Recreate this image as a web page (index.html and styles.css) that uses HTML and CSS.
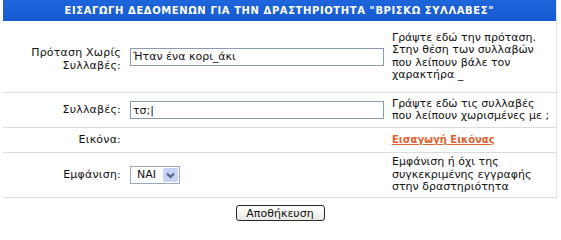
FILE: index.html
```html
<!DOCTYPE html>
<html lang="el">
<head>
<meta charset="utf-8">
<link rel="stylesheet" href="styles.css">
</head>
<body>
<div class="page">
  <table class="form">
    <colgroup>
      <col class="c-label">
      <col class="c-field">
      <col class="c-desc">
    </colgroup>
    <thead>
      <tr><th colspan="3" class="title">ΕΙΣΑΓΩΓΗ ΔΕΔΟΜΕΝΩΝ ΓΙΑ ΤΗΝ ΔΡΑΣΤΗΡΙΟΤΗΤΑ "ΒΡΙΣΚΩ ΣΥΛΛΑΒΕΣ"</th></tr>
    </thead>
    <tbody>
      <tr class="r1">
        <td class="label">Πρόταση Χωρίς<br>Συλλαβές:</td>
        <td class="field"><input class="text" type="text" value="Ήταν ένα κορι_άκι"></td>
        <td class="desc">Γράψτε εδώ την πρόταση.<br>Στην θέση των συλλαβών<br>που λείπουν βάλε τον<br>χαρακτήρα _</td>
      </tr>
      <tr class="r2">
        <td class="label">Συλλαβές:</td>
        <td class="field"><input class="text" type="text" value="τσ;|"></td>
        <td class="desc">Γράψτε εδώ τις συλλαβές<br>που λείπουν χωρισμένες με ;</td>
      </tr>
      <tr class="r3">
        <td class="label">Εικόνα:</td>
        <td class="field"></td>
        <td class="desc"><a class="link" href="#">Εισαγωγή Εικόνας</a></td>
      </tr>
      <tr class="r4">
        <td class="label">Εμφάνιση:</td>
        <td class="field">
          <div class="select"><span class="sel-val">NAI</span><span class="sel-btn"><svg width="9" height="7" viewBox="0 0 9 7"><path d="M1 1.5 L4.5 5 L8 1.5" fill="none" stroke="#4d6185" stroke-width="2"/></svg></span></div>
        </td>
        <td class="desc">Εμφάνιση ή όχι της<br>συγκεκριμένης εγγραφής<br>στην δραστηριότητα</td>
      </tr>
    </tbody>
  </table>
  <div class="actions"><button class="save" type="button">Αποθήκευση</button></div>
</div>
</body>
</html>
```

FILE: styles.css
```css
html, body {
  margin: 0;
  padding: 0;
  background: #ffffff;
}
body {
  font-family: "DejaVu Sans", Verdana, sans-serif;
  font-size: 11px;
  color: #111111;
}
.page {
  width: 561px;
  padding-left: 3px;
  box-sizing: border-box;
}
.form {
  width: 553px;
  border-collapse: collapse;
  table-layout: fixed;
  border-right: 1px solid #e4e4e4;
}
.c-label { width: 122px; }
.c-field { width: 260px; }
.c-desc { width: 171px; }
.title {
  height: 21px;
  padding: 0;
  background: linear-gradient(#1e66dc, #1559cf);
  color: #ffffff;
  font-weight: bold;
  font-size: 10px;
  letter-spacing: 0.6px;
  text-align: center;
  vertical-align: middle;
}
.form td {
  padding: 0;
  border-bottom: 1px solid #dcdcdc;
  vertical-align: middle;
  line-height: 12.5px;
}
.r1 td { height: 65px; }
.r2 td { height: 34px; }
.r3 td { height: 24px; }
.r4 td { height: 44px; }
.label {
  text-align: right;
  padding-right: 4px !important;
  letter-spacing: 0.2px;
}
.r1 .label { padding-top: 6px !important; }
.field {
  padding-left: 5px !important;
}
.desc {
  padding-left: 7px !important;
}
.text {
  display: block;
  width: 254px;
  height: 18px;
  box-sizing: border-box;
  margin: 0;
  padding: 0 2px;
  border: 1px solid #8a9bb3;
  font-family: "DejaVu Sans", Verdana, sans-serif;
  font-size: 11px;
  color: #111111;
  background: #ffffff;
}
.link {
  color: #e0602e;
  font-weight: bold;
  font-size: 10px;
  text-decoration: underline;
}
.select {
  display: flex;
  align-items: center;
  width: 50px;
  height: 18px;
  box-sizing: border-box;
  border: 1px solid #9aa8bd;
  background: #ffffff;
  padding: 1px;
}
.sel-val {
  flex: 1;
  padding-left: 5px;
}
.sel-btn {
  width: 15px;
  height: 14px;
  display: flex;
  align-items: center;
  justify-content: center;
  background: #c5d3f5;
  border-radius: 2px;
}
.actions {
  display: flex;
  justify-content: center;
  padding-top: 7px;
  padding-right: 4px;
}
.save {
  height: 16px;
  width: 89px;
  padding: 0;
  font-family: "DejaVu Sans", Verdana, sans-serif;
  font-size: 11px;
  color: #111111;
  background: linear-gradient(#ffffff, #e9e9e3);
  border: 1px solid #2a2a2a;
  border-radius: 3px;
  line-height: 13px;
}
```
